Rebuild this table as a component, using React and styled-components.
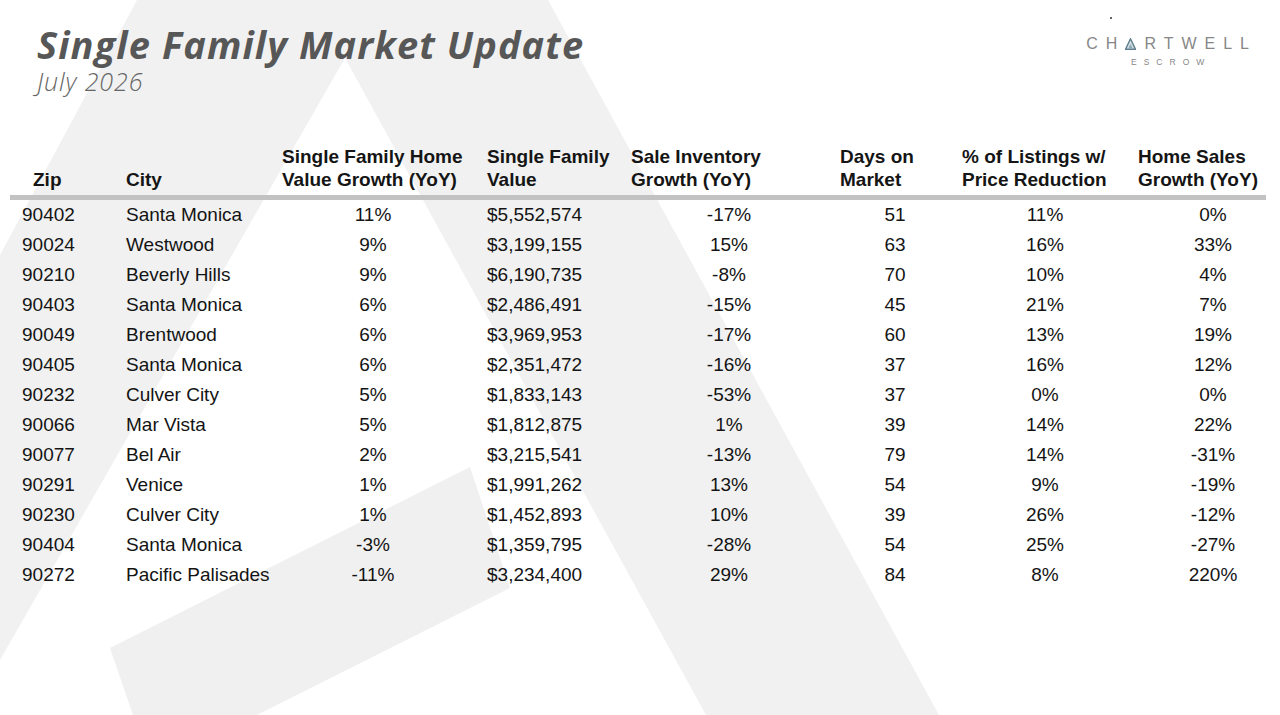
import React from "react";
import styled, { createGlobalStyle } from "styled-components";

const GlobalStyle = createGlobalStyle`
  html, body { margin: 0; padding: 0; background: #ffffff; }
  body { font-family: "Liberation Sans", Arial, sans-serif; overflow: hidden; }
`;

const Page = styled.div`
  position: relative;
  width: 1280px;
  height: 715px;
  overflow: hidden;
  background: #ffffff;
`;

const Watermark = styled.svg`
  position: absolute;
  left: 0;
  top: 0;
  width: 1280px;
  height: 715px;
  z-index: 0;
`;

const Content = styled.div`
  position: relative;
  z-index: 1;
  display: flex;
  flex-direction: column;
`;

const Header = styled.header`
  display: flex;
  justify-content: space-between;
  align-items: flex-start;
  padding: 22px 20px 0 37px;
`;

const TitleBlock = styled.div`
  display: flex;
  flex-direction: column;
`;

const Title = styled.h1`
  margin: 0;
  font-family: "Open Sans", "Noto Sans", sans-serif;
  font-style: italic;
  font-weight: 700;
  font-size: 38px;
  line-height: 44px;
  color: #575757;
  letter-spacing: 1.1px;
`;

const Subtitle = styled.div`
  margin-top: 5px;
  font-family: "Open Sans", "Noto Sans", sans-serif;
  font-style: italic;
  font-weight: 300;
  font-size: 25px;
  line-height: 20px;
  letter-spacing: 0.9px;
  color: #666666;
`;

const Logo = styled.div`
  position: relative;
  display: flex;
  flex-direction: column;
  align-items: center;
  margin-top: 14px;
  margin-right: 11px;
  color: #878787;
  font-family: "Liberation Sans", Arial, sans-serif;
`;

const Brand = styled.div`
  display: flex;
  align-items: center;
  font-size: 16px;
  line-height: 16px;
  letter-spacing: 8px;
  margin-right: -8px;
`;

const BrandSub = styled.div`
  margin-top: 6px;
  font-size: 8.5px;
  line-height: 9px;
  letter-spacing: 7px;
  margin-right: -7px;
`;

const Speck = styled.span`
  position: absolute;
  left: 24px;
  top: -19px;
  width: 2px;
  height: 2px;
  border-radius: 1px;
  background: #333;
`;

const Delta = styled.svg`
  width: 11px;
  height: 12px;
  margin-right: 8px;
  margin-top: -1px;
`;

const Table = styled.div`
  margin-top: 54px;
  margin-left: 10px;
  width: 1256px;
  display: flex;
  flex-direction: column;
`;

const COLS = "104px 156px 182px 160px 210px 122px 178px 132px";

const HeadRow = styled.div`
  display: grid;
  grid-template-columns: ${COLS};
  padding-left: 12px;
  align-items: end;
`;

const HeadCell = styled.div`
  padding-left: ${(p) => p.$pad}px;
  font-weight: 700;
  font-size: 19px;
  line-height: 23px;
  color: #151515;
  white-space: nowrap;
`;

const Rule = styled.div`
  margin-top: 4px;
  height: 5px;
  background: #c2c2c2;
`;

const Row = styled.div`
  display: grid;
  grid-template-columns: ${COLS};
  padding-left: 12px;
  height: 30px;
  align-items: center;
`;

const Cell = styled.div`
  font-size: 19px;
  line-height: 30px;
  color: #141414;
  white-space: nowrap;
  text-align: ${(p) => p.$align};
  padding-left: ${(p) => p.$pad}px;
`;

const columns = [
  { head: ["Zip"], headPad: 11, align: "left", pad: 0 },
  { head: ["City"], headPad: 0, align: "left", pad: 0 },
  { head: ["Single Family Home", "Value Growth (YoY)"], headPad: 0, align: "center", pad: 0 },
  { head: ["Single Family", "Value"], headPad: 23, align: "left", pad: 23 },
  { head: ["Sale Inventory", "Growth (YoY)"], headPad: 7, align: "center", pad: 0 },
  { head: ["Days on", "Market"], headPad: 6, align: "center", pad: 0 },
  { head: ["% of Listings w/", "Price Reduction"], headPad: 6, align: "center", pad: 0 },
  { head: ["Home Sales", "Growth (YoY)"], headPad: 4, align: "center", pad: 26 },
];

const rows = [
  ["90402", "Santa Monica", "11%", "$5,552,574", "-17%", "51", "11%", "0%"],
  ["90024", "Westwood", "9%", "$3,199,155", "15%", "63", "16%", "33%"],
  ["90210", "Beverly Hills", "9%", "$6,190,735", "-8%", "70", "10%", "4%"],
  ["90403", "Santa Monica", "6%", "$2,486,491", "-15%", "45", "21%", "7%"],
  ["90049", "Brentwood", "6%", "$3,969,953", "-17%", "60", "13%", "19%"],
  ["90405", "Santa Monica", "6%", "$2,351,472", "-16%", "37", "16%", "12%"],
  ["90232", "Culver City", "5%", "$1,833,143", "-53%", "37", "0%", "0%"],
  ["90066", "Mar Vista", "5%", "$1,812,875", "1%", "39", "14%", "22%"],
  ["90077", "Bel Air", "2%", "$3,215,541", "-13%", "79", "14%", "-31%"],
  ["90291", "Venice", "1%", "$1,991,262", "13%", "54", "9%", "-19%"],
  ["90230", "Culver City", "1%", "$1,452,893", "10%", "39", "26%", "-12%"],
  ["90404", "Santa Monica", "-3%", "$1,359,795", "-28%", "54", "25%", "-27%"],
  ["90272", "Pacific Palisades", "-11%", "$3,234,400", "29%", "84", "8%", "220%"],
];

export default function App() {
  return (
    <>
      <GlobalStyle />
      <Page>
        <Watermark viewBox="0 0 1280 715" aria-hidden="true">
          <polygon
            points="137,0 548,0 939,715 706,715 345,58 0,660 0,255"
            fill="#f1f1f1"
          />
          <polygon
            points="110,648 470,467 510,588 257,715 133,715"
            fill="#f0f0f0"
          />
        </Watermark>
        <Content>
          <Header>
            <TitleBlock>
              <Title>Single Family Market Update</Title>
              <Subtitle>July 2026</Subtitle>
            </TitleBlock>
            <Logo>
              <Speck />
              <Brand>
                CH
                <Delta viewBox="0 0 11 12">
                  <polygon points="5.5,0.8 10.4,11.2 0.6,11.2" fill="#d4e0e6" stroke="#5f7f8d" strokeWidth="1.4" strokeLinejoin="miter" />
                  <polygon points="5.5,6 7.6,10.2 3.4,10.2" fill="#8fa9b5" />
                </Delta>
                RTWELL
              </Brand>
              <BrandSub>ESCROW</BrandSub>
            </Logo>
          </Header>
          <Table>
            <HeadRow>
              {columns.map((c, i) => (
                <HeadCell key={i} $pad={c.headPad}>
                  {c.head.map((line, j) => (
                    <React.Fragment key={j}>
                      {j > 0 && <br />}
                      {line}
                    </React.Fragment>
                  ))}
                </HeadCell>
              ))}
            </HeadRow>
            <Rule />
            {rows.map((r, i) => (
              <Row key={i}>
                {r.map((v, j) => (
                  <Cell key={j} $align={columns[j].align} $pad={columns[j].pad}>
                    {v}
                  </Cell>
                ))}
              </Row>
            ))}
          </Table>
        </Content>
      </Page>
    </>
  );
}
